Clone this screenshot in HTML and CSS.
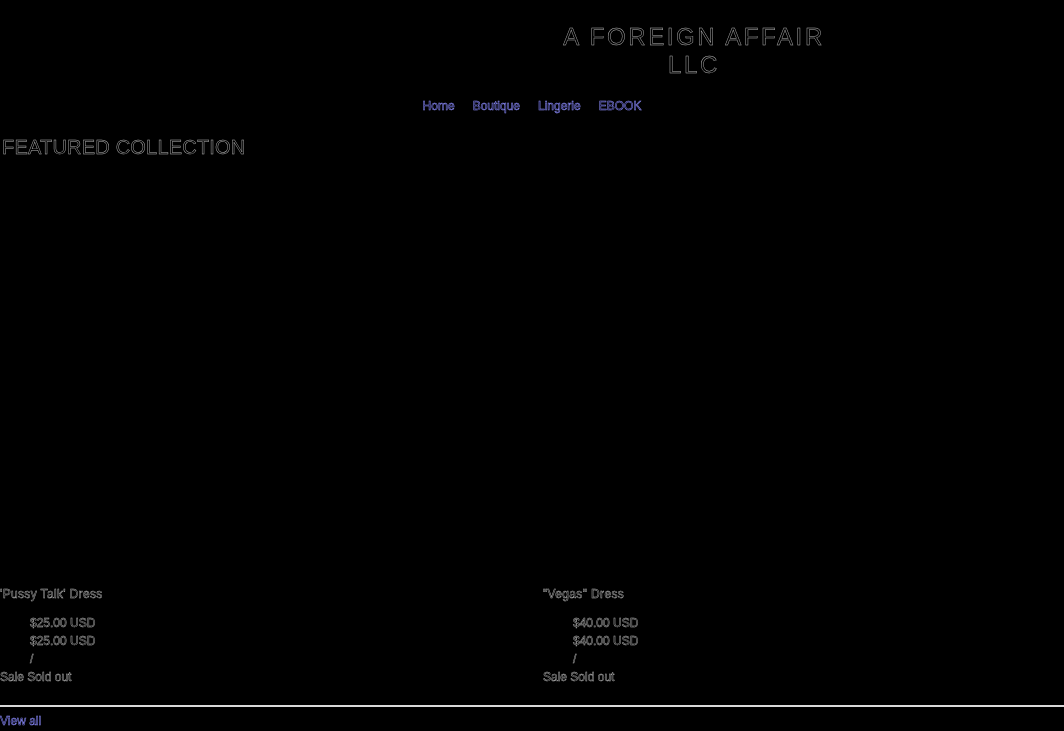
FILE: index.html
```html
<!DOCTYPE html>
<html>
<head>
<meta charset="utf-8">
<link rel="stylesheet" href="styles.css">
</head>
<body>
<div class="page">
<header class="site-header">
  <div class="brand-row">
    <div class="brand-spacer"></div>
    <h1 class="brand">A FOREIGN AFFAIR LLC</h1>
  </div>
  <nav class="nav">
    <a href="#">Home</a>
    <a href="#">Boutique</a>
    <a href="#">Lingerie</a>
    <a href="#">EBOOK</a>
  </nav>
</header>
<main>
  <h2 class="section-title">FEATURED COLLECTION</h2>
  <div class="products">
    <div class="product">
      <div class="product-media"></div>
      <div class="product-title">'Pussy Talk' Dress</div>
      <div class="price-list">
        <div>$25.00 USD</div>
        <div>$25.00 USD</div>
        <div>/</div>
      </div>
      <div class="badges">Sale Sold out</div>
    </div>
    <div class="product">
      <div class="product-media"></div>
      <div class="product-title">"Vegas" Dress</div>
      <div class="price-list">
        <div>$40.00 USD</div>
        <div>$40.00 USD</div>
        <div>/</div>
      </div>
      <div class="badges">Sale Sold out</div>
    </div>
  </div>
  <hr class="divider">
  <a class="view-all" href="#">View all</a>
</main>
</div>
</body>
</html>
```
FILE: styles.css
```css
html, body {
  margin: 0;
  padding: 0;
  background: #000;
}
body {
  font-family: "Liberation Sans", Arial, sans-serif;
  color: #000;
  height: 731px;
  overflow: hidden;
}
.page {
  -webkit-text-stroke: 0.45px #b4b4b4;
  will-change: transform;
  background: #000;
}
.site-header {
  padding-top: 23px;
}
.brand-row {
  display: grid;
  grid-template-columns: 324px 1fr;
}
.brand {
  margin: 0 auto;
  width: 300px;
  text-align: center;
  font-size: 24px;
  font-weight: normal;
  line-height: 28px;
  letter-spacing: 2.6px;
}
.nav {
  display: flex;
  justify-content: center;
  gap: 18px;
  margin-top: 18px;
  font-size: 12px;
  line-height: 18px;
}
.nav a, .view-all {
  color: #000018;
  -webkit-text-stroke: 0.5px #9090ff;
  text-decoration: none;
}
.section-title {
  margin: 20px 0 0 2px;
  font-size: 20px;
  font-weight: normal;
  line-height: 24px;
  letter-spacing: 0.2px;
}
.products {
  display: grid;
  grid-template-columns: 1fr 1fr;
  column-gap: 22px;
  font-size: 12px;
  line-height: 18px;
}
.product-media {
  height: 426px;
}
.product-title {
  letter-spacing: 0.35px;
}
.price-list {
  margin-top: 11px;
  padding-left: 30px;
}
.divider {
  margin: 19px 0 0 0;
  border: 0;
  border-top: 2px solid #d8d8d8;
  height: 0;
}
.view-all {
  display: block;
  margin-top: 5px;
  font-size: 12px;
  line-height: 18px;
}
```
